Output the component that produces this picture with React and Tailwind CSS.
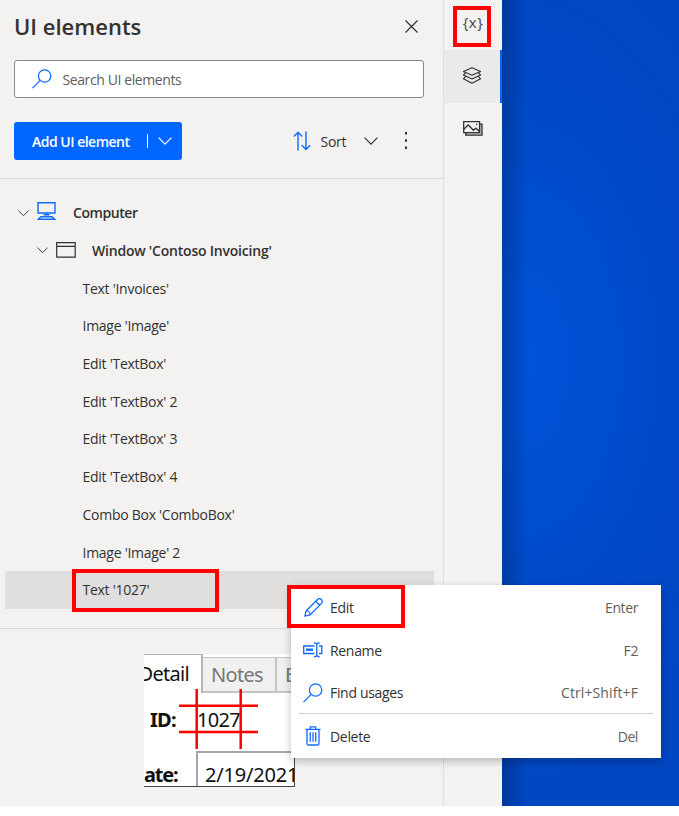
const BLUE = '#0f6cff';

function Chevron({ className = '', w = 14 }) {
  return (
    <svg width={w} height={w / 2 + 1} viewBox="0 0 14 8" fill="none" stroke="currentColor" strokeWidth="1.2" className={className}>
      <path d="M0.6 0.7 7 7.1 13.4 0.7" />
    </svg>
  );
}

function SearchIcon() {
  return (
    <svg width="20" height="20" viewBox="0 0 20 20" fill="none" stroke={BLUE} strokeWidth="1.3">
      <circle cx="12.6" cy="7" r="6.2" />
      <path d="M8.2 11.4 0.5 19.1" />
    </svg>
  );
}

function SortIcon() {
  return (
    <svg width="18" height="20" viewBox="0 0 18 20" fill="none" stroke={BLUE} strokeWidth="1.4">
      <path d="M5 19.5V1.2M0.8 5.4 5 1.2 9.2 5.4M13 0.5V18.5M8.8 14.3 13 18.5 17.2 14.3" />
    </svg>
  );
}

function ComputerIcon() {
  return (
    <svg width="19" height="18" viewBox="0 0 19 18" fill="none" stroke={BLUE} strokeWidth="1.4">
      <path d="M1 .7H18V11H1ZM9.5 11V13.2M6.5 12.8H12.5M4 14.7H15L17.8 17.3H1.2Z" />
    </svg>
  );
}

function WindowIcon() {
  return (
    <svg width="20" height="16" viewBox="0 0 20 16" fill="none" stroke="#323130" strokeWidth="1.2">
      <path d="M.7 .7H19.2V15.2H.7ZM.7 4.3H19.2" />
    </svg>
  );
}

function LayersIcon() {
  return (
    <svg width="20" height="18" viewBox="0 0 20 18" fill="none" stroke="#323130" strokeWidth="1.1" strokeLinejoin="round">
      <path d="M10 .8 18.6 4.5 10 8.3 1.4 4.5Z" />
      <path d="M3.6 6 1.4 7.9 10 12 18.6 7.9 16.4 6M3.6 9.6 1.4 11.8 10 16.2 18.6 11.8 16.4 9.6" />
    </svg>
  );
}

function ImagesIcon() {
  return (
    <svg width="20" height="15" viewBox="0 0 20 15" fill="none" stroke="#323130" strokeWidth="1.3">
      <path d="M2.8 12V14.2H19V3.2H16.6" fill="#c8c6c4" />
      <path d="M.7 .7H16.6V11.6H.7Z" fill="#f3f2f1" />
      <path d="M.8 8.2 5.2 4 10.5 9.3 12.8 7.2 16.5 10.4" />
      <path d="M13 3.4H14.3" />
    </svg>
  );
}

function PencilIcon() {
  return (
    <svg width="19" height="19" viewBox="0 0 19 19" fill="none" stroke={BLUE} strokeWidth="1.3" strokeLinejoin="round">
      <path d="M.8 18.2 2.2 12.7 13.5 1.5C14.6.4 16.2.4 17.4 1.5 18.6 2.7 18.6 4.3 17.5 5.4L6.2 16.8ZM2.2 12.7C4.2 12.8 6.1 14.5 6.2 16.8M12.3 2.7C12.7 5.1 14 6.4 16.3 6.6" />
    </svg>
  );
}

function RenameIcon() {
  return (
    <svg width="20" height="16" viewBox="0 0 20 16" fill="none" stroke={BLUE} strokeWidth="1.3">
      <path d="M11.5 4H.7V11.5H11.5M16 4H18.8V11.5H16M13.8 1.8V13.8M10.8 .8C12.6 .8 13.8 1.3 13.8 2.6 13.8 1.3 15 .8 16.8 .8M10.8 14.8C12.6 14.8 13.8 14.3 13.8 13 13.8 14.3 15 14.8 16.8 14.8" />
      <path d="M3 7.7H10" strokeWidth="2.4" />
    </svg>
  );
}

function TrashIcon() {
  return (
    <svg width="16" height="20" viewBox="0 0 16 20" fill="none" stroke={BLUE} strokeWidth="1.3">
      <path d="M.5 3.3H15.5M5.3 3V.8H10.7V3M2 3.5V17.5C2 18.4 2.5 19 3.4 19H12.6C13.5 19 14 18.4 14 17.5V3.5M5.3 6.3V15.8M8 6.3V15.8M10.7 6.3V15.8" />
    </svg>
  );
}

const items = [
  "Text 'Invoices'",
  "Image 'Image'",
  "Edit 'TextBox'",
  "Edit 'TextBox' 2",
  "Edit 'TextBox' 3",
  "Edit 'TextBox' 4",
  "Combo Box 'ComboBox'",
  "Image 'Image' 2",
  "Text '1027'",
];

function Tree() {
  return (
    <div className="h-[450px] shrink-0 border-b border-[#dcdad8] pt-[15px]">
      <div className="flex h-[37.7px] items-center pl-[18px]">
        <Chevron w={11} />
        <span className="ml-2 -mt-[3px]"><ComputerIcon /></span>
        <span className="ml-[17px] font-semibold tracking-[-0.43px]">Computer</span>
      </div>
      <div className="flex h-[37.7px] items-center pl-[37px]">
        <Chevron w={11} />
        <span className="ml-2 -mt-[2px]"><WindowIcon /></span>
        <span className="ml-4 font-semibold tracking-[-0.21px]">Window 'Contoso Invoicing'</span>
      </div>
      {items.map((t, i) => (
        <div key={t} className={`ml-[5px] mr-[9px] flex h-[37.7px] items-center pl-[77.5px] tracking-[-0.27px] ${i === 8 ? 'bg-[#e1dfdd]' : ''}`}>
          {t}
        </div>
      ))}
    </div>
  );
}

function Preview() {
  return (
    <div className="relative ml-[144px] mt-[25px] h-[133px] w-[151px] overflow-hidden border-b border-r border-[#444] bg-white font-['Noto_Sans',sans-serif] text-[20px] leading-none tracking-[-0.7px] text-[#111]">
      <div className="flex h-[39px] items-end">
        <div className="flex h-full w-[59px] shrink-0 items-center justify-end border-r-2 border-t border-[#b4b4b4] pr-[12px]">
          <span>Detail</span>
        </div>
        <div className="flex h-[36px] w-[74px] shrink-0 items-center justify-center border-b-2 border-r-2 border-t border-[#c4c4c4] bg-[#f0f0f0] pr-1 pt-px text-[#777]">Notes</div>
        <div className="flex h-[36px] w-[60px] shrink-0 items-center border-b-2 border-t border-[#c4c4c4] bg-[#f0f0f0] pl-2 pt-px text-[#777]">E</div>
      </div>
      <div className="mt-[16px] flex h-[22px] items-center">
        <span className="w-[53px] shrink-0 pl-[6px] font-bold">ID:</span>
        <span className="tracking-[-0.7px]">1027</span>
      </div>
      <div className="mt-[20px] flex h-[50px]">
        <span className="w-[52px] shrink-0 pt-[14px] font-bold tracking-[-1.2px]">ate:</span>
        <span className="w-[120px] shrink-0 border-l-2 border-t-2 border-[#a5a5ad] pl-[7px] pt-[12px] tracking-[-0.2px]">2/19/2021</span>
      </div>
      <svg className="absolute left-[35px] top-[35px]" width="80" height="62" viewBox="0 0 80 62" stroke="#f00" strokeWidth="2.5">
        <path d="M17.7 0V60M61.7 0V60M0 16.7H79M0 43H79" />
      </svg>
    </div>
  );
}

function MenuItem({ icon, label, shortcut, shortcutTracking = '', height = 'h-[42.5px]' }) {
  return (
    <div className={`flex items-center pl-[12px] pr-[23px] ${height}`}>
      <span className="-mt-px flex w-5 justify-center">{icon}</span>
      <span className="-mt-px ml-[7px] tracking-[-0.32px]">{label}</span>
      <span className={`-mt-px ml-auto text-[#605e5c] ${shortcutTracking}`}>{shortcut}</span>
    </div>
  );
}

export default function App() {
  return (
    <div className="relative h-[816px] w-[679px] overflow-hidden bg-white font-['Open_Sans',sans-serif] text-[14px] tracking-[-0.4px] text-[#323130]">
      <div className="flex h-[806px]">
        <section className="flex w-[444px] shrink-0 flex-col border-r border-[#dfdddb] bg-[#f3f2f1]">
          <header className="flex h-[53px] items-center justify-between pl-[14px] pr-[25px]">
            <h1 className="text-[22px] font-semibold tracking-[0px]">UI elements</h1>
            <svg width="13" height="13" viewBox="0 0 13 13" stroke="#323130" strokeWidth="1.2"><path d="M.5 .5 12.5 12.5M12.5 .5 .5 12.5" /></svg>
          </header>
          <div className="ml-[14px] mt-[7px] flex h-[38px] w-[410px] items-center rounded-[3px] border border-[#8a8886] bg-white pl-[17px]">
            <SearchIcon />
            <span className="ml-[10.5px] pt-px text-[#605e5c]">Search UI elements</span>
          </div>
          <div className="mt-[23px] flex h-[39px] items-center pl-[14px]">
            <button className="flex h-[38px] w-[168px] items-center rounded-[3px] bg-[#0066ff] pl-[18px] font-semibold tracking-[-0.5px] text-white">
              <span className="w-[115px] pt-px text-left">Add UI element</span>
              <span className="h-[14px] w-px bg-white" />
              <Chevron className="ml-[10px]" />
            </button>
            <span className="ml-[110.5px]"><SortIcon /></span>
            <span className="ml-[10px] w-[43px] pt-px tracking-[-0.3px]">Sort</span>
            <Chevron />
            <svg className="ml-[26.5px]" width="4" height="18" fill="#323130"><path d="M1 0h2v2.4H1zM1 7.3h2v2.4H1zM1 14.5h2v2.4H1z" /></svg>
          </div>
          <div className="h-[19px] shrink-0 border-b border-[#dcdad8]" />
          <Tree />
          <Preview />
        </section>
        <aside className="flex w-[58px] shrink-0 flex-col bg-[#f3f2f1]">
          <div className="flex h-[50px] items-center justify-center pb-[6px] text-[15px] tracking-[0.5px] text-[#484644]">{'{x}'}</div>
          <div className="flex h-[53px] items-center justify-center border-r-2 border-[#0066ff] bg-[#ebeae9] pb-px"><LayersIcon /></div>
          <div className="flex h-[53px] items-center justify-center pb-[2px]"><ImagesIcon /></div>
        </aside>
        <div className="flex-1 bg-[radial-gradient(ellipse_240px_420px_at_20px_360px,#0052d9_0%,#0049c8_65%,#0246c2_100%)]">
          <div className="h-full w-[26px] bg-linear-to-r from-black/20 to-transparent" />
        </div>
      </div>

      <div className="absolute left-[291px] top-[585px] h-[173px] w-[370px] bg-white pt-[2px] shadow-[0_3px_8px_rgba(0,0,0,0.25)]">
        <MenuItem icon={<PencilIcon />} label="Edit" shortcut="Enter" />
        <MenuItem icon={<RenameIcon />} label="Rename" shortcut="F2" />
        <MenuItem icon={<SearchIcon />} label="Find usages" shortcut="Ctrl+Shift+F" shortcutTracking="tracking-[0.1px]" />
        <div className="mx-2 -mt-[2px] mb-px h-px bg-[#d2d0ce]" />
        <MenuItem icon={<TrashIcon />} label="Delete" shortcut="Del" height="h-[44px]" />
      </div>

      <div className="absolute left-[453px] top-[6px] h-[41px] w-[38px] border-4 border-[#f00]" />
      <div className="absolute left-[72px] top-[569px] h-[43px] w-[147px] border-4 border-[#f00]" />
      <div className="absolute left-[287px] top-[585px] h-[43px] w-[118px] border-4 border-[#f00]" />
    </div>
  );
}
